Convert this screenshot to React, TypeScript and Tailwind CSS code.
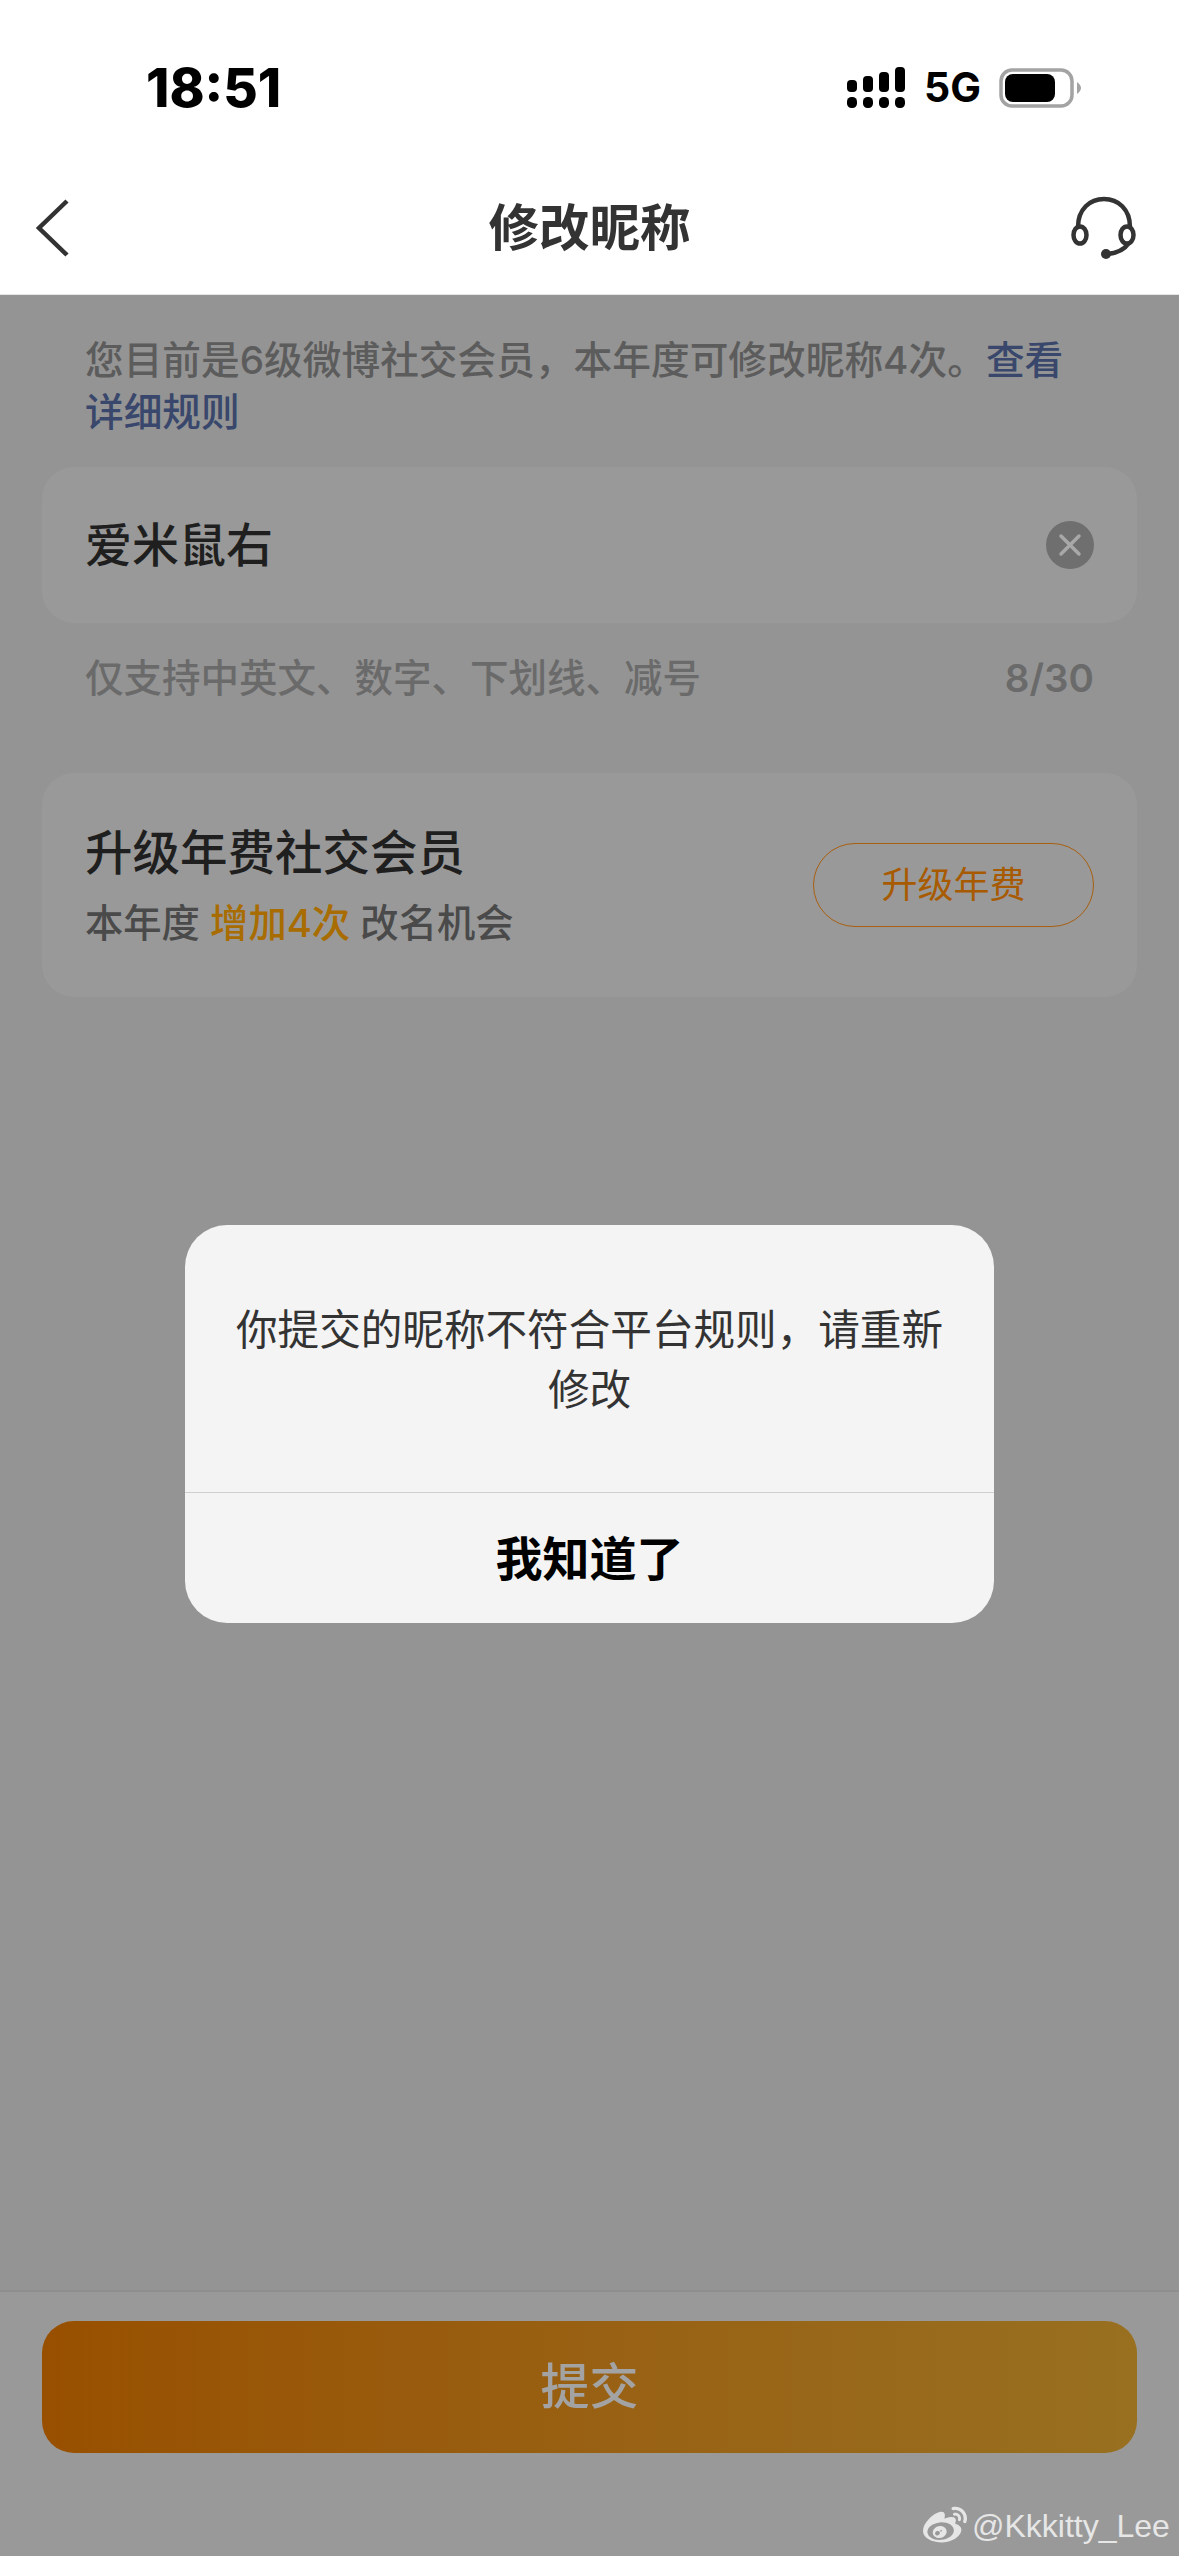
import { FaWeibo } from "react-icons/fa"

const cjk = { fontFamily: '"Inter", "Noto Sans CJK SC", sans-serif' }

function SignalIcon() {
  const tops = [
    { x: 0, y: 13, h: 12 },
    { x: 16, y: 9, h: 16 },
    { x: 32, y: 5, h: 20 },
    { x: 48, y: 0, h: 25 },
  ]
  return (
    <svg width="58" height="41" viewBox="0 0 58 41" fill="#000">
      {tops.map(b => (
        <rect key={b.x} x={b.x} y={b.y} width="10" height={b.h} rx="4" />
      ))}
      {tops.map(b => (
        <rect key={b.x} x={b.x} y="30" width="10" height="11" rx="4.5" />
      ))}
    </svg>
  )
}

function BatteryIcon() {
  return (
    <svg width="83" height="40" viewBox="0 0 83 40">
      <rect x="2" y="2" width="71" height="36" rx="11" fill="none" stroke="#a3a3a3" strokeWidth="3.5" />
      <rect x="6" y="6" width="50" height="28" rx="8" fill="#000" />
      <path d="M78 14 L78 26 Q82 23 82 20 Q82 17 78 14 Z" fill="#a3a3a3" />
    </svg>
  )
}

function HeadsetIcon() {
  return (
    <svg width="66" height="64" viewBox="0 0 66 64" fill="none" stroke="#333" strokeWidth="4.5" strokeLinecap="round">
      <path d="M7 31 C7 13 19 3 33 3 C47 3 59 13 59 31" />
      <ellipse cx="9" cy="39" rx="6.5" ry="8.5" />
      <ellipse cx="56" cy="39" rx="6.5" ry="8.5" />
      <path d="M57 48 C53 54 46 57 36 58" />
      <circle cx="35" cy="58" r="5" fill="#333" stroke="none" />
    </svg>
  )
}

export default function App() {
  return (
    <div className="relative flex h-[2556px] w-[1179px] flex-col overflow-hidden bg-[#949494]" style={cjk}>
      {/* status bar + nav */}
      <div className="h-[295px] border-b border-[#e4e4e4] bg-white">
        <div className="flex h-[196px] items-start justify-between pl-[146px] pr-[97px] pt-[60px]">
          <span className="text-[53px] font-extrabold leading-[56px] text-black">18:51</span>
          <div className="flex items-center pt-[7px]">
            <SignalIcon />
            <span className="ml-[19px] text-[41px] font-bold leading-[41px] text-black">5G</span>
            <div className="ml-[18px]">
              <BatteryIcon />
            </div>
          </div>
        </div>
        <div className="flex items-center justify-between pl-[36px] pr-[42px]">
          <div className="w-[106px]">
            <svg width="34" height="58" viewBox="0 0 34 58" fill="none" stroke="#333" strokeWidth="4.5">
              <path d="M31 2 L3 29 L31 56" />
            </svg>
          </div>
          <span className="text-[50.5px] font-bold leading-[60px] text-[#333]">修改昵称</span>
          <div className="flex w-[100px] justify-end">
            <HeadsetIcon />
          </div>
        </div>
      </div>

      {/* form */}
      <div className="flex-1 px-[42px]">
        <p className="pl-[43px] pr-[40px] pt-[39px] text-[38.7px] font-medium leading-[52px] text-[#5c5c5c]">
          您目前是6级微博社交会员，本年度可修改昵称4次。<span className="text-[#38476b]">查看详细规则</span>
        </p>

        <div className="mt-[29px] flex h-[156px] items-center justify-between rounded-[32px] bg-[#999999] pl-[43px] pr-[43px]">
          <span className="text-[47px] font-medium leading-[60px] text-[#1f1f1f]">爱米鼠右</span>
          <div className="flex h-[48px] w-[48px] items-center justify-center rounded-full bg-[#6f6f6f]">
            <svg width="24" height="24" viewBox="0 0 24 24" stroke="#a8a8a8" strokeWidth="3.5" strokeLinecap="round">
              <path d="M3 3 L21 21 M21 3 L3 21" />
            </svg>
          </div>
        </div>

        <div className="mt-[29px] flex items-center justify-between pl-[43px] pr-[43px] text-[38.5px] font-medium leading-[52px] text-[#6a6a6a]">
          <span>仅支持中英文、数字、下划线、减号</span>
          <span className="font-semibold">8/30</span>
        </div>

        <div className="mt-[69px] flex h-[224px] items-center justify-between rounded-[32px] bg-[#999999] pl-[43px] pr-[43px]">
          <div>
            <div className="text-[47.5px] font-medium leading-[60px] text-[#1f1f1f]">升级年费社交会员</div>
            <div className="mt-[15px] text-[38.3px] font-medium leading-[50px] text-[#4a4a4a]">
              本年度 <span className="text-[#a86c00]">增加4次</span> 改名机会
            </div>
          </div>
          <div className="flex h-[84px] w-[281px] items-center justify-center rounded-full border border-[#a85f10] text-[36px] text-[#a85a00]">
            升级年费
          </div>
        </div>
      </div>

      {/* submit */}
      <div className="h-[266px] border-t-2 border-[#8e8e8e] bg-[#999999] px-[42px] pt-[29px]">
        <div className="flex h-[132px] items-center justify-center rounded-[32px] bg-gradient-to-r from-[#985000] to-[#987020] text-[49px] font-medium text-[#a3a3a3]">
          提交
        </div>
      </div>

      {/* alert */}
      <div className="absolute left-[185px] top-[1225px] w-[809px] overflow-hidden rounded-[42px] bg-[#f4f4f4]">
        <div className="flex h-[267px] flex-col px-[40px] pt-[75px] text-center text-[41.6px] leading-[60px] text-[#333]">
          你提交的昵称不符合平台规则，请重新修改
        </div>
        <div className="flex h-[131px] items-center justify-center border-t border-[#cfcfcf] pt-[3px] text-[47px] font-bold text-black">
          我知道了
        </div>
      </div>

      {/* watermark */}
      <div className="absolute left-[922px] top-[2504px] flex items-center text-[#e6e6e6]">
        <FaWeibo className="h-[44px] w-[46px]" />
        <span className="ml-[4px] font-['Liberation_Sans'] text-[32px] leading-[40px]">@Kkkitty_Lee</span>
      </div>
    </div>
  )
}
